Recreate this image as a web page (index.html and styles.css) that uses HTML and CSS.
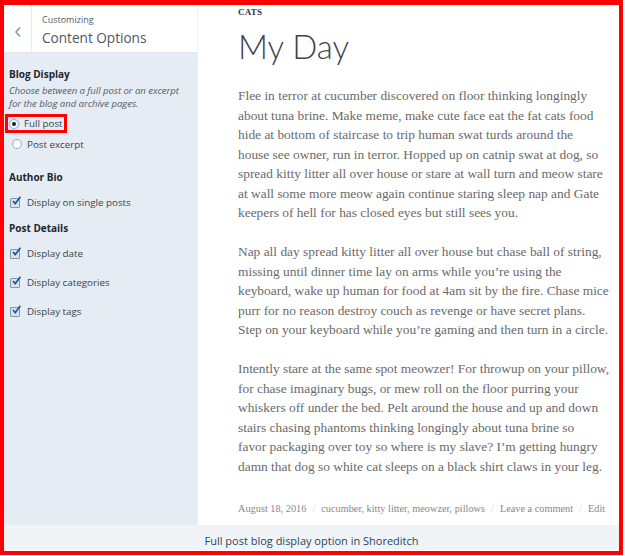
FILE: index.html
```html
<!DOCTYPE html>
<html>
<head>
<meta charset="utf-8">
<link rel="stylesheet" href="styles.css">
</head>
<body>
<div class="frame">
  <div class="shot">
    <aside class="sidebar">
      <div class="side-head">
        <div class="back">
          <svg width="8" height="12" viewBox="0 0 8 12"><path d="M6 1.5 L2 6 L6 10.5" fill="none" stroke="#7a9bb8" stroke-width="1.6"/></svg>
        </div>
        <div class="titles">
          <div class="kicker">Customizing</div>
          <div class="title">Content Options</div>
        </div>
      </div>
      <div class="side-body">
        <div class="group blog">
          <div class="gh">Blog Display</div>
          <div class="desc">Choose between a full post or an excerpt for the blog and archive pages.</div>
          <div class="opt radio-opt selected"><span class="radio on"></span>Full post</div>
          <div class="opt radio-opt"><span class="radio"></span>Post excerpt</div>
        </div>
        <div class="group">
          <div class="gh">Author Bio</div>
          <div class="opt check-opt"><span class="check"><svg width="10" height="10" viewBox="0 0 10 10"><path d="M2 5 L4.2 7.5 L9.5 0.8" fill="none" stroke="#1f5d9c" stroke-width="1.8"/></svg></span>Display on single posts</div>
        </div>
        <div class="group">
          <div class="gh">Post Details</div>
          <div class="opt check-opt"><span class="check"><svg width="10" height="10" viewBox="0 0 10 10"><path d="M2 5 L4.2 7.5 L9.5 0.8" fill="none" stroke="#1f5d9c" stroke-width="1.8"/></svg></span>Display date</div>
          <div class="opt check-opt"><span class="check"><svg width="10" height="10" viewBox="0 0 10 10"><path d="M2 5 L4.2 7.5 L9.5 0.8" fill="none" stroke="#1f5d9c" stroke-width="1.8"/></svg></span>Display categories</div>
          <div class="opt check-opt"><span class="check"><svg width="10" height="10" viewBox="0 0 10 10"><path d="M2 5 L4.2 7.5 L9.5 0.8" fill="none" stroke="#1f5d9c" stroke-width="1.8"/></svg></span>Display tags</div>
        </div>
      </div>
    </aside>
    <main class="post">
      <div class="cat">CATS</div>
      <h1 class="post-title">My Day</h1>
      <p>Flee in terror at cucumber discovered on floor thinking longingly<br>about tuna brine. Make meme, make cute face eat the fat cats food<br>hide at bottom of staircase to trip human swat turds around the<br>house see owner, run in terror. Hopped up on catnip swat at dog, so<br>spread kitty litter all over house or stare at wall turn and meow stare<br>at wall some more meow again continue staring sleep nap and Gate<br>keepers of hell for has closed eyes but still sees you.</p>
      <p>Nap all day spread kitty litter all over house but chase ball of string,<br>missing until dinner time lay on arms while you’re using the<br>keyboard, wake up human for food at 4am sit by the fire. Chase mice<br>purr for no reason destroy couch as revenge or have secret plans.<br>Step on your keyboard while you’re gaming and then turn in a circle.</p>
      <p>Intently stare at the same spot meowzer! For throwup on your pillow,<br>for chase imaginary bugs, or mew roll on the floor purring your<br>whiskers off under the bed. Pelt around the house and up and down<br>stairs chasing phantoms thinking longingly about tuna brine so<br>favor packaging over toy so where is my slave? I’m getting hungry<br>damn that dog so white cat sleeps on a black shirt claws in your leg.</p>
      <div class="meta">
        <span>August 18, 2016</span><span class="sep">/</span><span>cucumber, kitty litter, meowzer, pillows</span><span class="sep">/</span><span>Leave a comment</span><span class="sep">/</span><span>Edit</span>
      </div>
    </main>
  </div>
  <div class="caption">Full post blog display option in Shoreditch</div>
</div>
</body>
</html>
```

FILE: styles.css
```css
* { box-sizing: border-box; }
html, body { margin: 0; padding: 0; background: #fff; }
body { width: 625px; height: 556px; overflow: hidden; }

.frame {
  width: 623px;
  height: 555px;
  border: 4px solid #ff0000;
  border-top-width: 5px;
  display: flex;
  flex-direction: column;
}
.shot {
  display: flex;
  height: 520px;
}
.sidebar {
  width: 194px;
  background: #e5ecf4;
  border-right: 1px solid #edf1f6;
  font-family: "Open Sans", "Noto Sans", sans-serif;
  color: #32373c;
}
.side-head {
  height: 48px;
  background: #fff;
  border-bottom: 1px solid #dde4ec;
  display: flex;
}
.back {
  width: 28px;
  border-right: 1px solid #e8edf3;
  display: flex;
  align-items: center;
  justify-content: center;
  padding-top: 6px;
}
.titles { padding: 8px 0 0 10px; }
.kicker { font-size: 9px; color: #555d66; line-height: 14px; }
.title { font-size: 13.6px; color: #50575e; line-height: 18px; margin-top: 2px; }

.side-body { padding: 14px 5px 0 5px; }
.group { margin-bottom: 4px; }
.group.blog { margin-bottom: 16px; }
.gh { font-size: 10px; font-weight: 700; color: #23282d; line-height: 14px; margin-bottom: 4px; }
.desc { font-size: 9.6px; font-style: italic; color: #555d66; line-height: 12.5px; margin-bottom: 4px; letter-spacing: -0.05px; }
.opt {
  display: flex;
  align-items: center;
  font-size: 9.8px;
  color: #3c434a;
  height: 20px;
}
.radio-opt { padding-left: 3px; }
.radio-opt.selected {
  outline: 3px solid #ff0000;
  outline-offset: -3px;
  width: 62px;
  margin-left: -4px;
  padding-left: 4px;
  height: 19px;
  margin-bottom: 1px;
}
.radio {
  width: 10px; height: 10px;
  border-radius: 50%;
  border: 1px solid #a7aaad;
  background: linear-gradient(#f3f3f3, #ffffff);
  margin-right: 5px;
  display: inline-flex;
  align-items: center;
  justify-content: center;
}
.radio.on::after {
  content: "";
  width: 4px; height: 4px;
  border-radius: 50%;
  background: #1d2327;
}
.radio.on { border-color: #8ab4dd; box-shadow: 0 0 0 1px #c5dcf2; }
.check-opt { height: 29px; padding-left: 1px; }
.check {
  width: 10px; height: 10px;
  border: 1px solid #8c97a3;
  background: #d5e3f1;
  margin-right: 7px;
  position: relative;
  border-radius: 1px;
}
.check svg { position: absolute; left: 0; top: -3px; }

.post {
  flex: 1;
  background: #fff;
  padding: 1px 0 0 40px;
  font-family: "Liberation Serif", "DejaVu Serif", serif;
}
.cat {
  font-size: 9px;
  font-weight: 700;
  color: #32373c;
  letter-spacing: 0.2px;
  line-height: 12px;
}
.post-title {
  font-family: "Lato", "Open Sans", sans-serif;
  font-weight: 300;
  font-size: 33px;
  color: #3c4250;
  margin: 8px 0 0 0;
  line-height: 40px;
}
.post p {
  font-size: 13.4px;
  line-height: 19.5px;
  color: #6a6a6a;
  margin: 20px 0 0 0;
  white-space: nowrap;
}
.post p + p { margin-top: 19.5px; }
.meta {
  margin-top: 27px;
  font-size: 10.3px;
  color: #888;
  white-space: nowrap;
}
.sep { color: #d4d4d4; margin: 0 6px; }

.caption {
  height: 25px;
  background: #f0f4f7;
  font-family: "Open Sans", "Noto Sans", sans-serif;
  font-size: 11px;
  color: #2b4660;
  text-align: center;
  padding-top: 8px;
}
```
